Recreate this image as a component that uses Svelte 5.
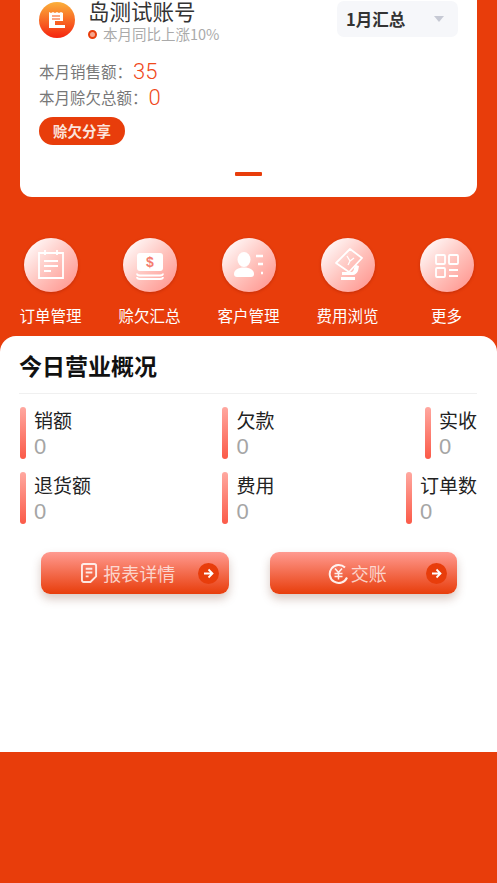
<script>
    const menus = [
        { key: 'order', label: '订单管理' },
        { key: 'debt', label: '赊欠汇总' },
        { key: 'customer', label: '客户管理' },
        { key: 'expense', label: '费用浏览' },
        { key: 'more', label: '更多' },
    ]
    const statRows = [
        [{ label: '销额', value: 0 }, { label: '欠款', value: 0 }, { label: '实收', value: 0 }],
        [{ label: '退货额', value: 0 }, { label: '费用', value: 0 }, { label: '订单数', value: 0 }],
    ]
</script>

<div class="page">
    <section class="card">
        <div class="head">
            <div class="avatar">
                <svg viewBox="0 0 36 36" width="36" height="36">
                    <path d="M10 10l2 1 2-1 2 1 2-1 2 1 2-1 2 1v8h-8v4h10v3H10z" fill="#fff" />
                    <path d="M13 14h8M13 17h8" stroke="#fb8a5c" stroke-width="1.300" />
                </svg>
            </div>
            <div class="who">
                <div class="name">岛测试账号</div>
                <div class="trend"><i class="dot"></i>本月同比上涨10%</div>
            </div>
            <div class="select">
                <span>1月汇总</span>
                <i class="caret"></i>
            </div>
        </div>
        <div class="line first">本月销售额：<b>35</b></div>
        <div class="line">本月赊欠总额：<b>0</b></div>
        <div class="share">赊欠分享</div>
        <div class="indicator"></div>
    </section>

    <nav class="menu">
        {#each menus as m}
            <div class="menu-item">
                <div class="bubble">
                    <svg viewBox="0 0 54 54" width="54" height="54" fill="none" stroke="#fff" stroke-width="1.800">
                        {#if m.key === 'order'}
                            <path d="M15 15h24v25H15z" />
                            <path d="M21 12v5M33 12v5M20 23h14M20 28h14M20 33h7" />
                        {:else if m.key === 'debt'}
                            <rect x="14" y="15" width="26" height="18" rx="3" fill="#fff" stroke="none" />
                            <path d="M14 35.500c0 1.500 1 2 3 2h20c2 0 3-.5 3-2M14 39c0 1.500 1 2 3 2h20c2 0 3-.5 3-2" />
                            <text x="27" y="29" class="dollar">$</text>
                        {:else if m.key === 'customer'}
                            <ellipse cx="22" cy="21.500" rx="6.500" ry="7.500" fill="#fff" stroke="none" />
                            <path d="M12 36c0-4 4-6.500 10-6.500s10 2.500 10 6.500c0 2-1 3-3 3H15c-2 0-3-1-3-3z" fill="#fff" stroke="none" />
                            <path d="M34 18h7M36 26h5M39 35h2" stroke-width="2.400" />
                        {:else if m.key === 'expense'}
                            <path d="M15 25l14-14 12 9-13 14z" stroke-linejoin="round" />
                            <path d="M26 18l3 5 4-3M27 27l2-4" stroke-width="1.300" />
                            <path d="M21 34h9c2 0 3-2 3-4l2-3 3 1-1 5c-1 2-3 4-5 4H21z" fill="#fff" stroke="none" />
                            <rect x="20" y="39" width="14" height="3" fill="#fff" stroke="none" />
                        {:else}
                            <rect x="16" y="17" width="9" height="9" rx="1" />
                            <rect x="29" y="17" width="9" height="9" rx="1" />
                            <rect x="16" y="30" width="9" height="9" rx="1" />
                            <path d="M29 32h9M29 38h9" />
                        {/if}
                    </svg>
                </div>
                <span>{m.label}</span>
            </div>
        {/each}
    </nav>

    <section class="panel">
        <h2>今日营业概况</h2>
        {#each statRows as row}
            <div class="stats">
                {#each row as s}
                    <div class="stat">
                        <i class="bar"></i>
                        <div>
                            <div class="stat-label">{s.label}</div>
                            <div class="stat-value">{s.value}</div>
                        </div>
                    </div>
                {/each}
            </div>
        {/each}
        <div class="actions">
            <div class="action">
                <span class="action-main">
                    <svg viewBox="0 0 18 22" width="17" height="21" fill="none" stroke="#fff" stroke-opacity=".85" stroke-width="2">
                        <path d="M10 20H3c-1 0-2-1-2-2V3c0-1 1-2 2-2h11c1 0 2 1 2 2v11l-6 6z" />
                        <path d="M5 6h7M5 10h7M5 14h3" />
                    </svg>
                    报表详情
                </span>
                <span class="go"><svg viewBox="0 0 21 21" width="21" height="21" fill="none" stroke="#fff" stroke-width="1.800"><path d="M6 10.500h8M10.500 6.500l4 4-4 4" /></svg></span>
            </div>
            <div class="action">
                <span class="action-main tight">
                    <svg viewBox="0 0 21 21" width="21" height="21" fill="none" stroke="#fff" stroke-opacity=".9" stroke-width="2">
                        <path d="M17 4.500a9 9 0 1 0 2 10" />
                        <path d="M7 5.500l3.500 4 3.500-4M6.500 10.500h8M6.500 13.500h8M10.500 9.500v7" stroke-width="1.500" />
                    </svg>
                    交账
                </span>
                <span class="go"><svg viewBox="0 0 21 21" width="21" height="21" fill="none" stroke="#fff" stroke-width="1.800"><path d="M6 10.500h8M10.500 6.500l4 4-4 4" /></svg></span>
            </div>
        </div>
    </section>
</div>

<style>
    :global(body) {
        margin: 0;
        background: #e83d0b;
        font-family: "Noto Sans CJK SC", "Liberation Sans", sans-serif;
    }

    .page {
        height: 883px;
        overflow: hidden;
        background: #e83d0b;
    }

    .card {
        box-sizing: border-box;
        height: 197px;
        margin: 0 20px;
        padding: 1px 19px 0;
        background: #fff;
        border-radius: 0 0 12px 12px;
    }

    .head {
        display: flex;
        align-items: flex-start;
    }

    .avatar {
        width: 36px;
        height: 36px;
        margin-top: 1px;
        border-radius: 50%;
        background: linear-gradient(180deg, #fbb03b, #f5240f);
        flex: none;
    }

    .avatar svg {
        display: block;
    }

    .who {
        margin-left: 13px;
        flex: 1;
    }

    .name {
        margin-top: -1px;
        font-size: 21.500px;
        line-height: 22px;
        color: #333;
    }

    .trend {
        display: flex;
        align-items: center;
        margin-top: 3px;
        font-size: 14.500px;
        line-height: 18px;
        color: #aaa;
    }

    .dot {
        box-sizing: border-box;
        width: 9px;
        height: 9px;
        margin-right: 6px;
        border-radius: 50%;
        border: 2.500px solid #e83d0b;
        background: #f7a58c;
    }

    .select {
        display: flex;
        align-items: center;
        justify-content: space-between;
        box-sizing: border-box;
        width: 121px;
        height: 36px;
        padding: 0 14px 0 9px;
        border-radius: 7px;
        background: #f6f7fa;
        font-size: 16.500px;
        font-weight: 600;
        color: #333;
    }

    .caret {
        width: 0;
        height: 0;
        border-left: 5px solid transparent;
        border-right: 5px solid transparent;
        border-top: 6px solid #c6c9d4;
    }

    .line {
        display: flex;
        align-items: center;
        height: 26px;
        font-size: 15.500px;
        color: #777;
    }

    .line.first {
        margin-top: 15px;
    }

    .line b {
        margin-left: 1px;
        font-family: Roboto, "Liberation Sans", sans-serif;
        font-size: 22px;
        font-weight: 300;
        color: #f0481a;
    }

    .share {
        width: 86px;
        height: 28px;
        margin-top: 7px;
        border-radius: 14px;
        background: #e83d0b;
        color: #fbe4dc;
        font-size: 14.500px;
        font-weight: 700;
        line-height: 28px;
        text-align: center;
    }

    .indicator {
        width: 27px;
        height: 4px;
        margin: 27px auto 0;
        border-radius: 1px;
        background: #e83d0b;
    }

    .menu {
        display: grid;
        grid-template-columns: repeat(5, 99px);
        padding: 41px 0 0 1px;
        height: 98px;
    }

    .menu-item {
        display: flex;
        flex-direction: column;
        align-items: center;
        color: #fff;
        font-size: 15.500px;
        line-height: 20px;
        white-space: nowrap;
    }

    .bubble {
        width: 54px;
        height: 54px;
        margin-bottom: 13px;
        border-radius: 50%;
        background: linear-gradient(135deg, #fff 5%, #ffc0ba 55%, #ff8f88 100%);
        box-shadow: 0 1px 3px rgba(130, 20, 0, 0.35);
    }

    .bubble svg {
        display: block;
    }

    .dollar {
        font-family: "Liberation Sans", sans-serif;
        font-size: 14px;
        font-weight: 700;
        fill: #f47c70;
        stroke: none;
        text-anchor: middle;
    }

    .panel {
        box-sizing: border-box;
        height: 416px;
        padding: 0 20px;
        background: #fff;
        border-radius: 16px 16px 0 0;
    }

    h2 {
        margin: 0 0 13px -1px;
        height: 58px;
        box-sizing: border-box;
        border-bottom: 1px solid #f0f0f0;
        font-size: 23px;
        font-weight: 700;
        line-height: 58px;
        color: #111;
    }

    .stats {
        display: flex;
        justify-content: space-between;
        margin-bottom: 13px;
    }

    .stat {
        display: flex;
        height: 52px;
    }

    .bar {
        width: 6px;
        margin-right: 8px;
        border-radius: 3px;
        background: linear-gradient(180deg, #ffa8a0, #fb5a48);
    }

    .stat-label {
        margin-top: -1px;
        font-size: 19px;
        line-height: 28px;
        color: #222;
    }

    .stat-value {
        font-family: "Liberation Sans", sans-serif;
        font-size: 22px;
        line-height: 25px;
        color: #a5a5a5;
    }

    .actions {
        display: flex;
        justify-content: space-between;
        margin: 28px 20px 0 21px;
    }

    .action {
        position: relative;
        display: flex;
        justify-content: center;
        align-items: center;
        box-sizing: border-box;
        width: 187.500px;
        height: 42px;
        border-radius: 9px;
        background: linear-gradient(180deg, #ff9a90, #e83d0b);
        box-shadow: 0 5px 10px rgba(120, 60, 40, 0.28);
        color: rgba(255, 255, 255, 0.72);
        font-size: 18px;
    }

    .action-main {
        display: flex;
        align-items: center;
        gap: 5px;
        margin-left: -13px;
    }

    .action-main.tight {
        gap: 2px;
        margin-left: -12px;
    }

    .go {
        position: absolute;
        right: 10px;
        top: 10.500px;
        width: 21px;
        height: 21px;
        border-radius: 50%;
        background: #e83d0b;
    }

    .go svg {
        display: block;
    }
</style>
